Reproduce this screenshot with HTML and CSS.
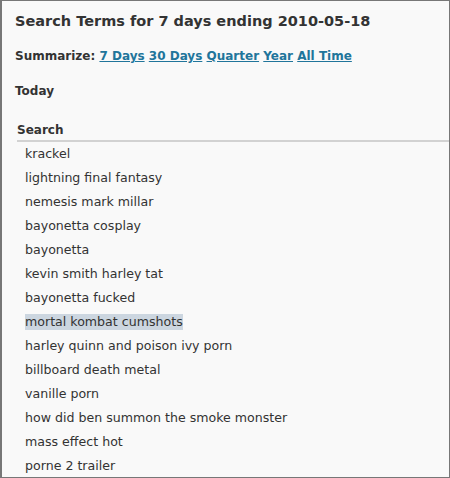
FILE: index.html
```html
<!DOCTYPE html>
<html lang="en">
<head>
    <meta charset="UTF-8">
    <title>Search Terms</title>
    <link rel="stylesheet" href="styles.css">
</head>
<body>
    <div class="panel">
        <h2>Search Terms for 7 days ending 2010-05-18</h2>
        <p class="summarize">Summarize:
            <a href="#">7 Days</a>
            <a href="#">30 Days</a>
            <a href="#">Quarter</a>
            <a href="#">Year</a>
            <a href="#">All Time</a>
        </p>
        <h4>Today</h4>
        <table class="terms">
            <thead>
                <tr><th>Search</th></tr>
            </thead>
            <tbody>
                <tr><td><span>krackel</span></td></tr>
                <tr><td><span>lightning final fantasy</span></td></tr>
                <tr><td><span>nemesis mark millar</span></td></tr>
                <tr><td><span>bayonetta cosplay</span></td></tr>
                <tr><td><span>bayonetta</span></td></tr>
                <tr><td><span>kevin smith harley tat</span></td></tr>
                <tr><td><span>bayonetta fucked</span></td></tr>
                <tr><td><span class="hl">mortal kombat cumshots</span></td></tr>
                <tr><td><span>harley quinn and poison ivy porn</span></td></tr>
                <tr><td><span>billboard death metal</span></td></tr>
                <tr><td><span>vanille porn</span></td></tr>
                <tr><td><span>how did ben summon the smoke monster</span></td></tr>
                <tr><td><span>mass effect hot</span></td></tr>
                <tr><td><span>porne 2 trailer</span></td></tr>
            </tbody>
        </table>
    </div>
</body>
</html>
```

FILE: styles.css
```css
body {
    margin: 0;
    font-family: "DejaVu Sans", Verdana, sans-serif;
    color: #333;
}
.panel {
    height: 478px;
    box-sizing: border-box;
    border: 1px solid #777;
    border-left-width: 2px;
    background: #f9f9f9;
    padding: 0 0 0 13px;
    overflow: hidden;
}
h2 {
    font-size: 14.5px;
    line-height: 20px;
    margin: 10px 0 0;
}
.summarize {
    font-size: 12px;
    font-weight: bold;
    line-height: 16px;
    margin: 17px 0 0;
}
.summarize a {
    color: #21759b;
}
h4 {
    font-size: 12px;
    line-height: 16px;
    margin: 19px 0 0;
}
.terms {
    border-collapse: collapse;
    width: calc(100% - 2px);
    margin: 23px 0 0 2px;
    font-size: 12.6px;
}
.terms th {
    text-align: left;
    font-size: 12px;
    line-height: 16px;
    padding: 0 0 2px;
    border-bottom: 2px solid #d2d2d2;
}
.terms td {
    height: 24px;
    box-sizing: border-box;
    padding: 0 0 3px 8px;
    vertical-align: bottom;
}
.terms td span {
    display: inline-block;
    line-height: 16px;
    vertical-align: top;
}
.terms .hl {
    background: #ccd6e0;
}
```
